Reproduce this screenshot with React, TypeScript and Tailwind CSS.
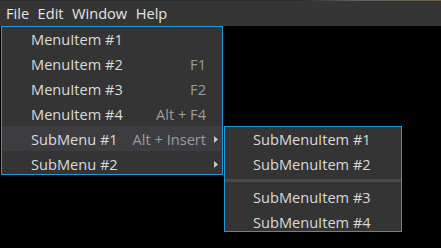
import React from "react";

const font = { fontFamily: '"Open Sans", "Noto Sans", sans-serif' };

function Arrow() {
  return (
    <svg width="4" height="7" viewBox="0 0 4 7" className="block">
      <path d="M0 0 L4 3.5 L0 7 Z" fill="#c8c8c8" />
    </svg>
  );
}

type Item = { label: string; shortcut?: string; sub?: boolean; hover?: boolean };

const mainItems: Item[] = [
  { label: "MenuItem #1" },
  { label: "MenuItem #2", shortcut: "F1" },
  { label: "MenuItem #3", shortcut: "F2" },
  { label: "MenuItem #4", shortcut: "Alt + F4" },
  { label: "SubMenu #1", shortcut: "Alt + Insert", sub: true, hover: true },
  { label: "SubMenu #2", sub: true },
];

export default function App() {
  return (
    <div className="relative w-[441px] h-[248px] bg-black overflow-hidden text-[14.6px]" style={font}>
      <div className="h-px w-full bg-[linear-gradient(to_right,#2c2c2c_0%,#2c2c2c_68%,#5e5e5e_80%,#6a6040_100%)]" />
      <div className="h-[25px] bg-[#353535] flex items-center pl-[6px] gap-[8.5px] text-[#e4e4e4] leading-none pb-[1px]">
        <span>File</span>
        <span>Edit</span>
        <span>Window</span>
        <span>Help</span>
      </div>

      {/* main popup */}
      <div className="absolute left-[1px] top-[26px] w-[222px] h-[149px] border border-[#219ad8] bg-[#343434] overflow-hidden">
        <div className="-mt-px">
          {mainItems.map((it) => (
            <div
              key={it.label}
              className={`h-[25px] flex items-center pl-[29px] leading-[25px] pt-px ${it.hover ? "bg-[#3d3d41]" : ""}`}
            >
              <span className="flex-1 text-[#dadada] whitespace-nowrap">{it.label}</span>
              {it.shortcut && <span className="text-[#9c9c9c] whitespace-nowrap">{it.shortcut}</span>}
              <span className="w-[16px] flex items-center justify-start pl-[8px] shrink-0">
                {it.sub && <Arrow />}
              </span>
            </div>
          ))}
        </div>
      </div>

      {/* submenu */}
      <div className="absolute left-[224px] top-[126px] w-[178px] h-[106px] border border-[#219ad8] bg-[#343434] overflow-hidden">
        <div className="-mt-px">
          {["SubMenuItem #1", "SubMenuItem #2"].map((l) => (
            <div key={l} className="h-[25px] flex items-center pl-[28px] leading-[25px] pt-px text-[#dadada] whitespace-nowrap">
              {l}
            </div>
          ))}
          <div className="h-[8px] flex flex-col justify-center">
            <div className="h-[3px] bg-[#4a4a4a]" />
          </div>
          {["SubMenuItem #3", "SubMenuItem #4"].map((l) => (
            <div key={l} className="h-[25px] flex items-center pl-[28px] leading-[25px] pt-px text-[#dadada] whitespace-nowrap">
              {l}
            </div>
          ))}
        </div>
      </div>
    </div>
  );
}
